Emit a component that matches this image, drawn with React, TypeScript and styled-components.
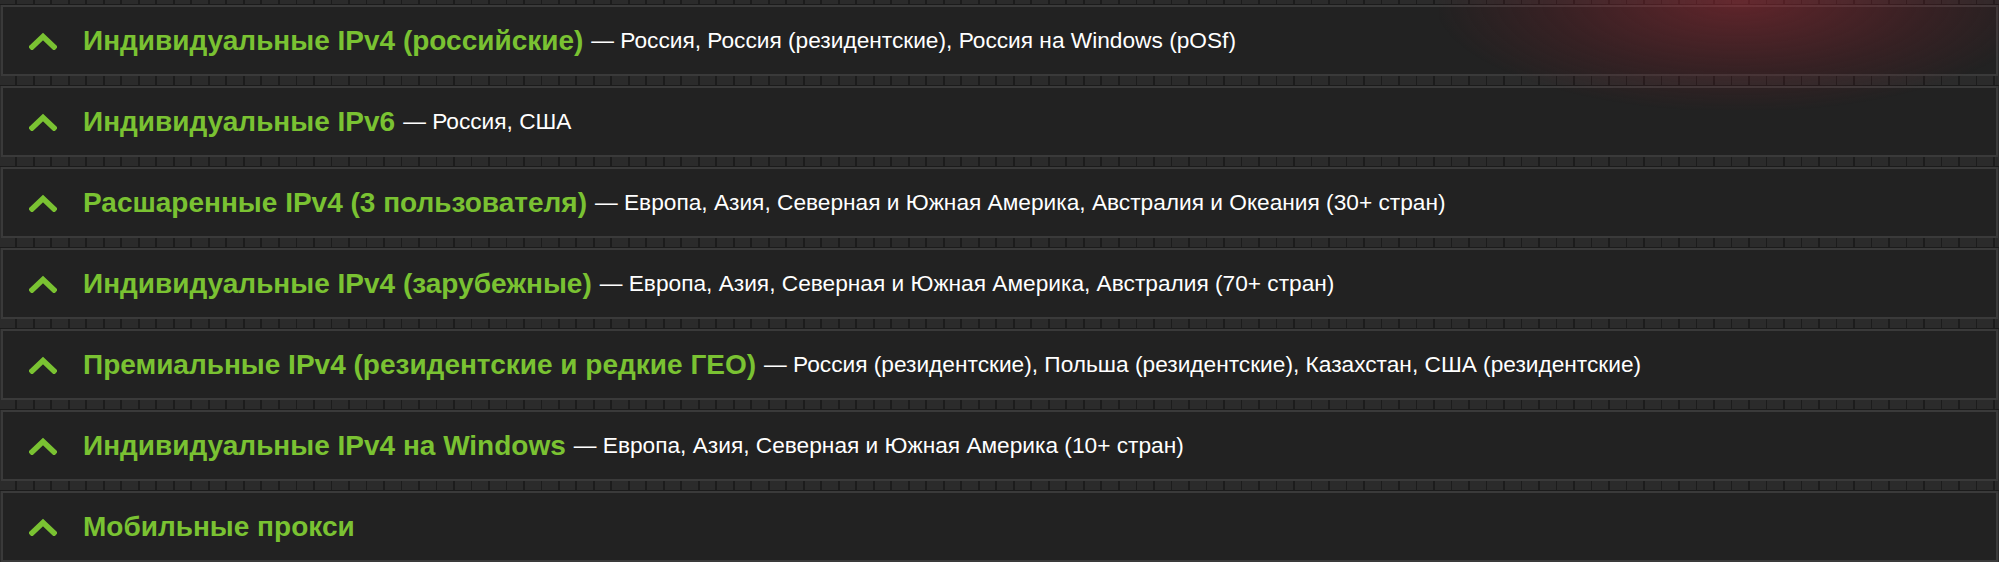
import React from "react";
import styled, { createGlobalStyle } from "styled-components";

const GlobalStyle = createGlobalStyle`
  html, body {
    margin: 0;
    padding: 0;
  }
  body {
    background-color: #2a2a2a;
    background-image:
      linear-gradient(to bottom, transparent 0, transparent 7px, #1b1b1b 7px, #1b1b1b 8px, transparent 8px),
      repeating-linear-gradient(to right, #2b2b2b 0, #2b2b2b 15.5px, #1c1c1c 15.5px, #1c1c1c 17.5px);
    background-size: 100% 81px, 100% 81px;
    background-position: 0 -3px, 0 0;
    font-family: "Liberation Sans", Arial, sans-serif;
    overflow: hidden;
  }
  body::after {
    content: "";
    position: fixed;
    top: -110px;
    right: -40px;
    width: 600px;
    height: 220px;
    pointer-events: none;
    background: radial-gradient(ellipse at center, rgba(160, 40, 52, 0.5) 0%, rgba(130, 30, 42, 0.22) 45%, rgba(90, 20, 30, 0) 72%);
  }
`;

interface Category {
  title: string;
  regions?: string;
}

const categories: Category[] = [
  {
    title: "Индивидуальные IPv4 (российские)",
    regions: "Россия, Россия (резидентские), Россия на Windows (pOSf)",
  },
  { title: "Индивидуальные IPv6", regions: "Россия, США" },
  {
    title: "Расшаренные IPv4 (3 пользователя)",
    regions:
      "Европа, Азия, Северная и Южная Америка, Австралия и Океания (30+ стран)",
  },
  {
    title: "Индивидуальные IPv4 (зарубежные)",
    regions: "Европа, Азия, Северная и Южная Америка, Австралия (70+ стран)",
  },
  {
    title: "Премиальные IPv4 (резидентские и редкие ГЕО)",
    regions:
      "Россия (резидентские), Польша (резидентские), Казахстан, США (резидентские)",
  },
  {
    title: "Индивидуальные IPv4 на Windows",
    regions: "Европа, Азия, Северная и Южная Америка (10+ стран)",
  },
  { title: "Мобильные прокси" },
];

const Chevron = () => (
  <SChevron width="28" height="18" viewBox="0 0 28 18">
    <path d="M3 15 L14 4.5 L25 15" />
  </SChevron>
);

export default function App() {
  return (
    <>
      <GlobalStyle />
      <SList>
        {categories.map((cat) => (
          <SPanel key={cat.title}>
            <Chevron />
            <STitle>{cat.title}</STitle>
            {cat.regions && <SRegions>— {cat.regions}</SRegions>}
          </SPanel>
        ))}
      </SList>
    </>
  );
}

const SList = styled.div`
  display: flex;
  flex-direction: column;
  gap: 10px;
  padding: 5px 1px 0 1px;
`;

const SPanel = styled.div`
  height: 71px;
  box-sizing: border-box;
  display: flex;
  align-items: center;
  padding: 0 0 0 26px;
  background: #222222;
  border: 2px solid #3a3a3a;
  flex-shrink: 0;
`;

const SChevron = styled.svg`
  flex-shrink: 0;
  margin-right: 26px;
  & path {
    fill: none;
    stroke: #7ac232;
    stroke-width: 5.5;
    stroke-linecap: square;
    stroke-linejoin: miter;
  }
`;

const STitle = styled.span`
  color: #7ac232;
  font-size: 28px;
  font-weight: bold;
  white-space: nowrap;
`;

const SRegions = styled.span`
  color: #ffffff;
  font-size: 22.7px;
  margin-left: 8px;
  white-space: nowrap;
`;
